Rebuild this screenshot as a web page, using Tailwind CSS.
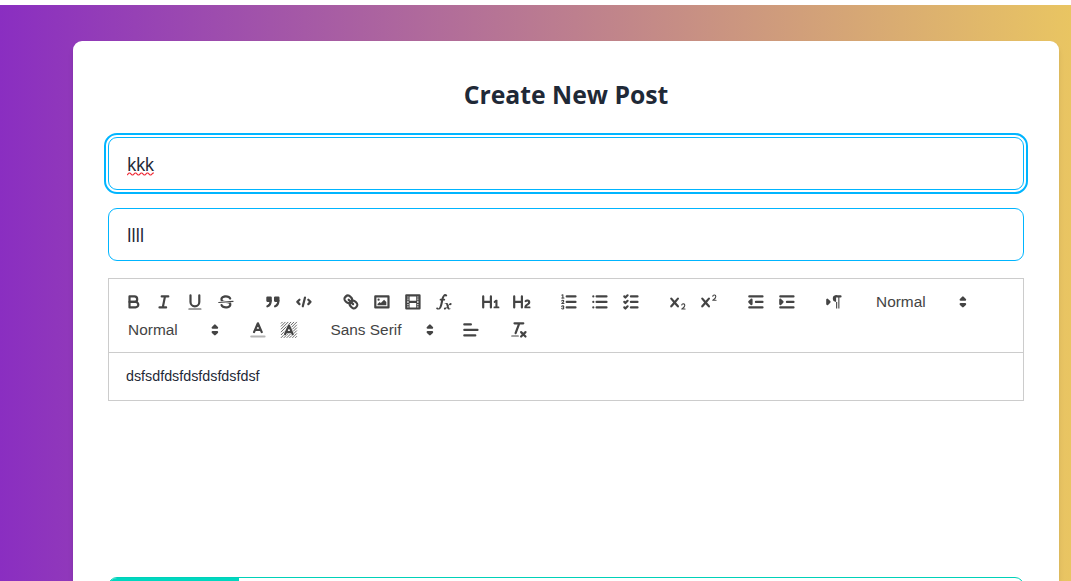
<!DOCTYPE html>
<html lang="en">
<head>
<meta charset="utf-8">
<title>Create New Post</title>
<script src="https://cdn.jsdelivr.net/npm/@tailwindcss/browser@4"></script>
</head>
<body class="h-[581px] overflow-hidden bg-white pt-[5px] font-['Open_Sans','Noto_Sans',sans-serif]">
<svg class="hidden">
  <defs>
    <symbol id="arrows" viewBox="0 0 18 18"><polygon points="7 11 9 13 11 11 7 11"/><polygon points="7 7 9 5 11 7 7 7"/></symbol>
    <symbol id="x" viewBox="0 0 18 18"><path fill="#444" stroke="none" d="M9.65,5.241a1,1,0,0,0-1.409.108L6,7.964,3.759,5.349A1,1,0,0,0,2.192,6.59178Q2.21541,6.6213,2.241,6.649L4.684,9.5,2.241,12.35A1,1,0,0,0,3.71,13.70722q0.02557-.02768.049-0.05722L6,11.036,8.241,13.65a1,1,0,1,0,1.567-1.24277Q9.78459,12.3777,9.759,12.35L7.316,9.5,9.759,6.651A1,1,0,0,0,9.65,5.241Z"/></symbol>
  </defs>
</svg>
<div class="h-[576px] overflow-hidden bg-[linear-gradient(90deg,#8a2ec1,#e9c562)] pt-9 pr-3 pl-[73px]">
  <main class="h-[540px] overflow-hidden rounded-t-[9px] bg-white px-[35px] pt-[36px] shadow-md">
    <h1 class="h-[36px] text-center text-[24.75px] leading-[36px] font-bold text-[#1f2937]">Create New Post</h1>
    <div class="mt-6 flex h-[53px] items-center rounded-[9px] border border-[#00b5ff] px-[18px] text-[17.6px] text-[#1f2937] outline-2 outline-offset-2 outline-[#00b5ff]"><span class="relative font-['Noto_Sans',sans-serif] leading-6 tracking-[-0.5px]">kkk<svg class="absolute top-[20px] left-0" width="27" height="4" fill="none" stroke="#f0303c" stroke-width="1.1"><path d="M0 3l2-2h1l2 2h1l2-2h1l2 2h1l2-2h1l2 2h1l2-2h1l2 2h1l2-2h1"/></svg></span></div>
    <div class="mt-[18px] flex h-[53px] items-center rounded-[9px] border border-[#00b5ff] px-[18px] text-[17.6px] text-[#1f2937]"><span class="font-['Noto_Sans',sans-serif] leading-6 tracking-[-0.3px]">llll</span></div>

    <section class="mt-[17px] h-[123px] border border-[#ccc] font-['Liberation_Sans',sans-serif]">
      <div class="h-[74px] border-b border-[#ccc] pt-[9px] pl-[9.2px] text-[15.4px] font-medium text-[#444] [&_button]:flex [&_button]:h-7 [&_button]:w-[30.8px] [&_button]:items-center [&_button]:justify-center [&_svg]:size-[19.8px] [&_svg]:fill-none [&_svg]:stroke-[#444] [&_svg]:stroke-2 [&_svg]:[stroke-linecap:round] [&_svg]:[stroke-linejoin:round]">
        <div class="flex h-7 gap-[16.5px]">
          <div class="flex">
            <button><svg viewBox="0 0 18 18"><path d="M5,4H9.5A2.5,2.5,0,0,1,12,6.5v0A2.5,2.5,0,0,1,9.5,9H5V4Z"/><path d="M5,9h5.5A2.5,2.5,0,0,1,13,11.5v0A2.5,2.5,0,0,1,10.5,14H5V9Z"/></svg></button>
            <button><svg viewBox="0 0 18 18"><path d="M7 4H13M5 14H11M8 14L10 4"/></svg></button>
            <button><svg viewBox="0 0 18 18"><path d="M5,3V9a4.012,4.012,0,0,0,4,4H9a4.012,4.012,0,0,0,4-4V3"/><rect fill="#444" stroke="none" height="1" rx=".5" width="12" x="3" y="15"/></svg></button>
            <button><svg viewBox="0 0 18 18"><path stroke-width="1" d="M15.5 8.5L2.5 9.5"/><path fill="#444" stroke="none" d="M9.007,8C6.542,7.791,6,7.519,6,6.5,6,5.792,7.283,5,9,5c1.571,0,2.765.679,2.969,1.309a1,1,0,0,0,1.9-.617C13.356,4.106,11.354,3,9,3,6.2,3,4,4.538,4,6.5a3.2,3.2,0,0,0,.5,1.843Z"/><path fill="#444" stroke="none" d="M8.984,10C11.457,10.208,12,10.479,12,11.5c0,0.708-1.283,1.5-3,1.5-1.571,0-2.765-.679-2.969-1.309a1,1,0,1,0-1.9.617C4.644,13.894,6.646,15,9,15c2.8,0,5-1.538,5-3.5a3.2,3.2,0,0,0-.5-1.843Z"/></svg></button>
          </div>
          <div class="flex">
            <button><svg viewBox="0 0 18 18"><g fill="#444"><rect height="3" width="3" x="4" y="5"/><rect height="3" width="3" x="11" y="5"/><path d="M7,8c0,4.031-3,5-3,5"/><path d="M14,8c0,4.031-3,5-3,5"/></g></svg></button>
            <button><svg viewBox="0 0 18 18"><path d="M5 7L3 9L5 11M13 7L15 9L13 11M10 5L8 13"/></svg></button>
          </div>
          <div class="flex">
            <button><svg viewBox="0 0 18 18"><path d="M7 7L11 11"/><path d="M8.9,4.577a3.476,3.476,0,0,1,.36,4.679A3.476,3.476,0,0,1,4.577,8.9C3.185,7.5,2.035,6.4,4.217,4.217S7.5,3.185,8.9,4.577Z"/><path d="M13.423,9.1a3.476,3.476,0,0,0-4.679-.36,3.476,3.476,0,0,0,.36,4.679c1.392,1.392,2.5,2.542,4.679.36S14.815,10.5,13.423,9.1Z"/></svg></button>
            <button><svg viewBox="0 0 18 18"><rect height="10" width="12" x="3" y="4"/><circle fill="#444" stroke="none" cx="6" cy="7" r="1"/><polyline fill="#444" stroke="none" points="5 12 5 11 7 9 8 10 11 7 13 9 13 12 5 12"/></svg></button>
            <button><svg viewBox="0 0 18 18"><rect height="12" width="12" x="3" y="3"/><path fill="#444" stroke="none" d="M5 3h1v12H5zM12 3h1v12h-1zM5 8h8v2H5zM3 5h3v1H3zM3 7h3v1H3zM3 10h3v1H3zM3 12h3v1H3zM12 5h3v1h-3zM12 7h3v1h-3zM12 10h3v1h-3zM12 12h3v1h-3z"/></svg></button>
            <button><svg viewBox="0 0 18 18"><g fill="#444" stroke="none"><path d="M11.759,2.482a2.561,2.561,0,0,0-3.53.607A7.656,7.656,0,0,0,6.8,6.2C6.109,9.188,5.275,14.677,4.15,14.927a1.545,1.545,0,0,0-1.3-.933A0.922,0.922,0,0,0,2,15.036S1.954,16,4.119,16s3.091-2.691,3.7-5.553c0.177-.826.36-1.726,0.554-2.6L8.775,6.2c0.381-1.421.807-2.521,1.306-2.676a1.014,1.014,0,0,0,1.02.56A0.966,0.966,0,0,0,11.759,2.482Z"/><rect height="1.6" rx="0.8" width="5" x="5.15" y="6.2"/><path d="M13.663,12.027a1.662,1.662,0,0,1,.266-0.276q0.193,0.069.456,0.138a2.1,2.1,0,0,0,.535.069,1.075,1.075,0,0,0,.767-0.3,1.044,1.044,0,0,0,.314-0.8,0.84,0.84,0,0,0-.238-0.619,0.8,0.8,0,0,0-.594-0.239,1.154,1.154,0,0,0-.781.3,4.607,4.607,0,0,0-.781,1q-0.091.15-.218,0.346l-0.246.38c-0.068-.288-0.137-0.582-0.212-0.885-0.459-1.847-2.494-.984-2.941-0.8-0.482.2-.353,0.647-0.094,0.529a0.869,0.869,0,0,1,1.281.585c0.217,0.751.377,1.436,0.527,2.038a5.688,5.688,0,0,1-.362.467,2.69,2.69,0,0,1-.264.271q-0.221-.08-0.471-0.147a2.029,2.029,0,0,0-.522-0.066,1.079,1.079,0,0,0-.768.3A1.058,1.058,0,0,0,9,15.131a0.82,0.82,0,0,0,.832.852,1.134,1.134,0,0,0,.787-0.3,5.11,5.11,0,0,0,.776-0.993q0.141-.219.215-0.34c0.046-.076.122-0.194,0.223-0.346a2.786,2.786,0,0,0,.918,1.726,2.582,2.582,0,0,0,2.376-.185c0.317-.181.212-0.565,0-0.494A0.807,0.807,0,0,1,14.176,15a5.159,5.159,0,0,1-.913-2.446l0,0Q13.487,12.24,13.663,12.027Z"/></g></svg></button>
          </div>
          <div class="flex">
            <button><svg viewBox="0 0 18 18"><path fill="#444" stroke="none" d="M10,4V14a1,1,0,0,1-2,0V10H3v4a1,1,0,0,1-2,0V4A1,1,0,0,1,3,4V8H8V4a1,1,0,0,1,2,0Zm6.06787,9.209H14.98975V7.59863a.54085.54085,0,0,0-.605-.60547h-.62744a1.01119,1.01119,0,0,0-.748.29688L11.645,8.56641a.5435.5435,0,0,0-.022.8584l.28613.30762a.53861.53861,0,0,0,.84717.0332l.09912-.08789a1.2137,1.2137,0,0,0,.2417-.35254h.02246s-.01123.30859-.01123.60547V13.209H12.041a.54085.54085,0,0,0-.605.60547v.43945a.54085.54085,0,0,0,.605.60547h4.02686a.54085.54085,0,0,0,.605-.60547v-.43945A.54085.54085,0,0,0,16.06787,13.209Z"/></svg></button>
            <button><svg viewBox="0 0 18 18"><path fill="#444" stroke="none" d="M16.73975,13.81445v.43945a.54085.54085,0,0,1-.605.60547H11.855a.58392.58392,0,0,1-.64893-.60547V14.0127c0-2.90527,3.39941-3.42187,3.39941-4.55469a.77675.77675,0,0,0-.84717-.78125,1.17684,1.17684,0,0,0-.83594.38477c-.2749.26367-.561.374-.85791.13184l-.4292-.34082c-.30811-.24219-.38525-.51758-.1543-.81445a2.97155,2.97155,0,0,1,2.45361-1.17676,2.45393,2.45393,0,0,1,2.68408,2.40918c0,2.45312-3.1792,2.92676-3.27832,3.93848h2.79443A.54085.54085,0,0,1,16.73975,13.81445ZM9,3A.99974.99974,0,0,0,8,4V8H3V4A1,1,0,0,0,1,4V14a1,1,0,0,0,2,0V10H8v4a1,1,0,0,0,2,0V4A.99974.99974,0,0,0,9,3Z"/></svg></button>
          </div>
          <div class="flex">
            <button><svg viewBox="0 0 18 18"><path d="M7 4H15M7 9H15M7 14H15"/><g stroke-width="1"><path d="M2.5 5.5H4.5"/><path fill="#444" stroke="none" d="M3.5,6A0.5,0.5,0,0,1,3,5.5V3.085l-0.276.138A0.5,0.5,0,0,1,2.053,3c-0.124-.247-0.023-0.324.224-0.447l1-.5A0.5,0.5,0,0,1,4,2.5v3A0.5,0.5,0,0,1,3.5,6Z"/><path d="M4.5,10.5h-2c0-.234,1.85-1.076,1.85-2.234A0.959,0.959,0,0,0,2.5,8.156"/><path d="M2.5,14.846a0.959,0.959,0,0,0,1.85-.109A0.7,0.7,0,0,0,3.75,14a0.688,0.688,0,0,0,.6-0.736,0.959,0.959,0,0,0-1.85-.109"/></g></svg></button>
            <button><svg viewBox="0 0 18 18"><path d="M6 4H15M6 9H15M6 14H15M3 4H3M3 9H3M3 14H3"/></svg></button>
            <button><svg viewBox="0 0 18 18"><path d="M9 4H15M9 9H15M9 14H15M3 4L4 5L6 3M3 9L4 10L6 8M3 14L4 15L6 13"/></svg></button>
          </div>
          <div class="flex">
            <button><svg viewBox="0 0 18 18"><use href="#x"/><path fill="#444" stroke="none" d="M15.5,15H13.861a3.858,3.858,0,0,0,1.914-2.975,1.8,1.8,0,0,0-1.6-1.751A1.921,1.921,0,0,0,12.021,11.7a0.50013,0.50013,0,1,0,.957.291h0a0.914,0.914,0,0,1,1.053-.725,0.81,0.81,0,0,1,.744.762c0,1.076-1.16971,1.86982-1.93971,2.43082A1.45639,1.45639,0,0,0,12,15.5a0.5,0.5,0,0,0,.5.5h3A0.5,0.5,0,0,0,15.5,15Z"/></svg></button>
            <button><svg viewBox="0 0 18 18"><use href="#x"/><path fill="#444" stroke="none" d="M15.5,7H13.861a4.015,4.015,0,0,0,1.914-2.975,1.8,1.8,0,0,0-1.6-1.751A1.922,1.922,0,0,0,12.021,3.7a0.5,0.5,0,1,0,.957.291,0.917,0.917,0,0,1,1.053-.725,0.81,0.81,0,0,1,.744.762c0,1.077-1.164,1.925-1.934,2.486A1.423,1.423,0,0,0,12,7.5a0.5,0.5,0,0,0,.5.5h3A0.5,0.5,0,0,0,15.5,7Z"/></svg></button>
          </div>
          <div class="flex">
            <button><svg viewBox="0 0 18 18"><path d="M3 14H15M3 4H15M9 9H15"/><polyline fill="#444" points="5 7 5 11 3 9 5 7"/></svg></button>
            <button><svg viewBox="0 0 18 18"><path d="M3 14H15M3 4H15M9 9H15"/><polyline fill="#444" points="3 7 3 11 5 9 3 7"/></svg></button>
          </div>
          <div class="flex">
            <button><svg viewBox="0 0 18 18"><polygon fill="#444" points="3 11 5 9 3 7 3 11"/><path d="M15 4H11"/><path fill="#444" stroke="none" d="M11,3a3,3,0,0,0,0,6h1V3H11ZM11 4h1v11h-1zM13 4h1v11h-1z"/></svg></button>
          </div>
          <div class="flex w-[106.6px] items-center justify-between pl-[9.9px]"><span>Normal</span><svg viewBox="0 0 18 18"><use href="#arrows"/></svg></div>
        </div>
        <div class="flex h-7 gap-[16.5px]">
          <div class="mr-[1.2px] flex w-[106.6px] items-center justify-between pl-[9.9px]"><span>Normal</span><svg viewBox="0 0 18 18"><use href="#arrows"/></svg></div>
          <div class="flex">
            <button><svg viewBox="0 0 18 18"><path opacity=".4" d="M3 15H15"/><path d="M5.5 11L9 3L12.5 11M11.63 9H6.38"/></svg></button>
            <button><svg viewBox="0 0 18 18"><path stroke-width="0.75" d="M2 3L3 2M2 5.6L5.6 2M2 8.2L8.2 2M2 10.8L10.8 2M2 13.4L13.4 2M2 16L16 2M4.6 16L16 4.6M7.2 16L16 7.2M9.8 16L16 9.8M12.4 16L16 12.4M15 16L16 15"/><path stroke="#fff" stroke-width="3.2" d="M5.5 13L9 5L12.5 13M11.63 11H6.38"/><path d="M5.5 13L9 5L12.5 13M11.63 11H6.38"/></svg></button>
          </div>
          <div class="flex w-[118.8px] items-center justify-between pl-[9.9px]"><span>Sans Serif</span><svg viewBox="0 0 18 18"><use href="#arrows"/></svg></div>
          <button><svg viewBox="0 0 18 18"><path d="M3 9H15M3 14H13M3 4H9"/></svg></button>
          <button><svg viewBox="0 0 18 18"><path d="M5 3H13M6 12L9.35 3M11 11L15 15M15 11L11 15"/><rect fill="#444" stroke="none" height="1" rx=".5" width="7" x="2" y="14"/></svg></button>
        </div>
      </div>
      <p class="flex h-[47px] items-center pl-[17px] text-[14.3px] text-[#1f2937]">dsfsdfdsfdsfdsfdsfdsf</p>
    </section>
    <div class="mt-[176px] flex h-[53px] overflow-hidden rounded-[9px] border border-[#00d1b8]"><div class="w-[130px] bg-[#00d7c0]"></div></div>
  </main>
</div>
</body>
</html>
